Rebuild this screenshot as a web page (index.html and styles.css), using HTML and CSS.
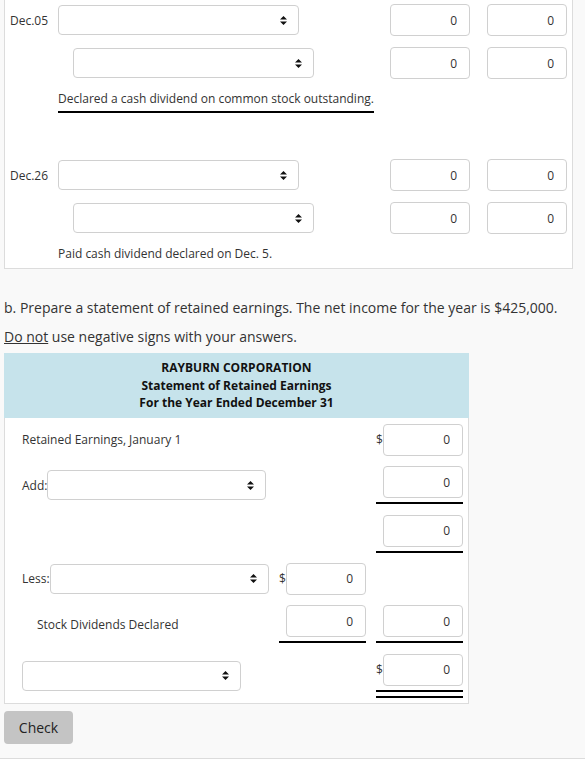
FILE: index.html
```html
<!DOCTYPE html>
<html lang="en">
<head>
<meta charset="utf-8">
<title>Retained Earnings</title>
<link rel="stylesheet" href="styles.css">
</head>
<body>
<div class="page">
  <div class="journal">
    <div class="entry">
      <div class="jrow">
        <span class="date">Dec.05</span>
        <div class="sel"><svg class="arr" width="7" height="9" viewBox="0 0 7 9"><path d="M0 3.6L3.5 0L7 3.6Z M0 5.4L7 5.4L3.5 9Z" fill="#111"/></svg></div>
        <input class="num first" type="text" value="0">
        <input class="num" type="text" value="0">
      </div>
      <div class="jrow">
        <span class="date"></span>
        <div class="sel indent"><svg class="arr" width="7" height="9" viewBox="0 0 7 9"><path d="M0 3.6L3.5 0L7 3.6Z M0 5.4L7 5.4L3.5 9Z" fill="#111"/></svg></div>
        <input class="num first" type="text" value="0">
        <input class="num" type="text" value="0">
      </div>
      <div class="desc"><div class="ul">Declared a cash dividend on common stock outstanding.</div></div>
    </div>
    <div class="entry">
      <div class="jrow">
        <span class="date">Dec.26</span>
        <div class="sel"><svg class="arr" width="7" height="9" viewBox="0 0 7 9"><path d="M0 3.6L3.5 0L7 3.6Z M0 5.4L7 5.4L3.5 9Z" fill="#111"/></svg></div>
        <input class="num first" type="text" value="0">
        <input class="num" type="text" value="0">
      </div>
      <div class="jrow">
        <span class="date"></span>
        <div class="sel indent"><svg class="arr" width="7" height="9" viewBox="0 0 7 9"><path d="M0 3.6L3.5 0L7 3.6Z M0 5.4L7 5.4L3.5 9Z" fill="#111"/></svg></div>
        <input class="num first" type="text" value="0">
        <input class="num" type="text" value="0">
      </div>
      <div class="desc">Paid cash dividend declared on Dec. 5.</div>
    </div>
  </div>

  <p class="task first-task">b. Prepare a statement of retained earnings. The net income for the year is $425,000.</p>
  <p class="task"><u>Do not</u> use negative signs with your answers.</p>

  <div class="stmt">
    <div class="stmt-head">
      <div>RAYBURN CORPORATION</div>
      <div>Statement of Retained Earnings</div>
      <div>For the Year Ended December 31</div>
    </div>
    <div class="stmt-body">
      <!-- row 1 -->
      <div class="lbl">Retained Earnings, January 1</div>
      <div class="amt"></div>
      <div class="amt"><span class="dollar">$</span><input class="num" type="text" value="0"></div>
      <!-- row 2 -->
      <div class="lbl">Add:<div class="sel tsel"><svg class="arr" width="7" height="9" viewBox="0 0 7 9"><path d="M0 3.6L3.5 0L7 3.6Z M0 5.4L7 5.4L3.5 9Z" fill="#111"/></svg></div></div>
      <div class="amt"></div>
      <div class="amt line"><input class="num" type="text" value="0"></div>
      <!-- row 3 -->
      <div class="lbl"></div>
      <div class="amt"></div>
      <div class="amt line"><input class="num" type="text" value="0"></div>
      <!-- row 4 -->
      <div class="lbl">Less:<div class="sel tsel"><svg class="arr" width="7" height="9" viewBox="0 0 7 9"><path d="M0 3.6L3.5 0L7 3.6Z M0 5.4L7 5.4L3.5 9Z" fill="#111"/></svg></div></div>
      <div class="amt"><span class="dollar">$</span><input class="num" type="text" value="0"></div>
      <div class="amt"></div>
      <!-- row 5 -->
      <div class="lbl sub">Stock Dividends Declared</div>
      <div class="amt line"><input class="num" type="text" value="0"></div>
      <div class="amt line"><input class="num" type="text" value="0"></div>
      <!-- row 6 -->
      <div class="lbl"><div class="sel tsel"><svg class="arr" width="7" height="9" viewBox="0 0 7 9"><path d="M0 3.6L3.5 0L7 3.6Z M0 5.4L7 5.4L3.5 9Z" fill="#111"/></svg></div></div>
      <div class="amt"></div>
      <div class="dbl"><div class="amt line"><span class="dollar">$</span><input class="num" type="text" value="0"></div></div>
    </div>
  </div>

  <button class="btn" type="button">Check</button>
</div>
</body>
</html>
```

FILE: styles.css
```css
* { box-sizing: border-box; }
html, body { margin: 0; padding: 0; }
body {
  background: #f9f9f9;
  font-family: "Open Sans", "Liberation Sans", sans-serif;
  font-size: 12px;
  color: #333;
}
.page {
  padding: 0 0 14px 4px;
  border-bottom: 1px solid #dcdcdc;
}

/* journal panel */
.journal {
  width: 569px;
  background: #fff;
  border: 1px solid #dcdcdc;
  border-top: none;
  padding: 4px 5px 5px 0;
}
.entry + .entry { margin-top: 46px; }
.jrow {
  display: flex;
  align-items: center;
  height: 32px;
}
.jrow + .jrow { margin-top: 11px; }
.date {
  flex: none;
  width: 53px;
  padding-left: 5px;
}
.sel {
  flex: none;
  width: 241px;
  height: 30px;
  background: #fff;
  border: 1px solid #d0d0d0;
  border-radius: 4px;
  display: flex;
  align-items: center;
  justify-content: flex-end;
  padding-right: 11px;
}
.sel.indent { margin-left: 15px; }
.arr { display: block; }
.num {
  flex: none;
  width: 80px;
  height: 32px;
  margin: 0;
  background: #fff;
  border: 1px solid #d0d0d0;
  border-radius: 4px;
  padding: 0 12px;
  text-align: right;
  font-family: "Open Sans", "Liberation Sans", sans-serif;
  font-size: 12px;
  color: #333;
}
.num.first { margin-left: auto; }
.jrow .num + .num { margin-left: 17px; }
.desc {
  margin-top: 10px;
  line-height: 19px;
  padding-left: 53px;
}
.desc .ul {
  width: fit-content;
  border-bottom: 2px solid #000;
  padding-bottom: 3px;
}

/* task text */
.task {
  margin: 9px 0 0 0;
  font-size: 14px;
  line-height: 20px;
}
.task.first-task { margin-top: 29px; }

/* statement */
.stmt {
  width: 465px;
  margin-top: 6px;
}
.stmt-head {
  background: #c6e3eb;
  text-align: center;
  font-weight: 700;
  line-height: 17.6px;
  padding: 6px 0 6px;
  color: #111;
}
.stmt-body {
  background: #fff;
  border: 1px solid #dcdcdc;
  border-top: none;
  padding: 6px 5px 5px 17px;
  display: grid;
  grid-template-columns: 1fr 87px 87px;
  column-gap: 10px;
  row-gap: 10.4px;
  align-items: center;
}
.lbl {
  display: flex;
  align-items: center;
}
.lbl.sub { padding-left: 15px; }
.tsel { width: 219px; }
.amt {
  display: flex;
  align-items: center;
  justify-content: flex-end;
}
.amt .dollar { margin-right: auto; }
.amt.line {
  border-bottom: 2px solid #000;
  padding-bottom: 4px;
}
.dbl {
  border-bottom: 2px solid #000;
  padding-bottom: 4px;
}

.btn {
  display: block;
  margin-top: 7px;
  width: 69px;
  height: 33px;
  background: #c4c4c4;
  border: none;
  border-radius: 4px;
  font-family: "Open Sans", "Liberation Sans", sans-serif;
  font-size: 14px;
  color: #222;
  padding: 0;
}
```
